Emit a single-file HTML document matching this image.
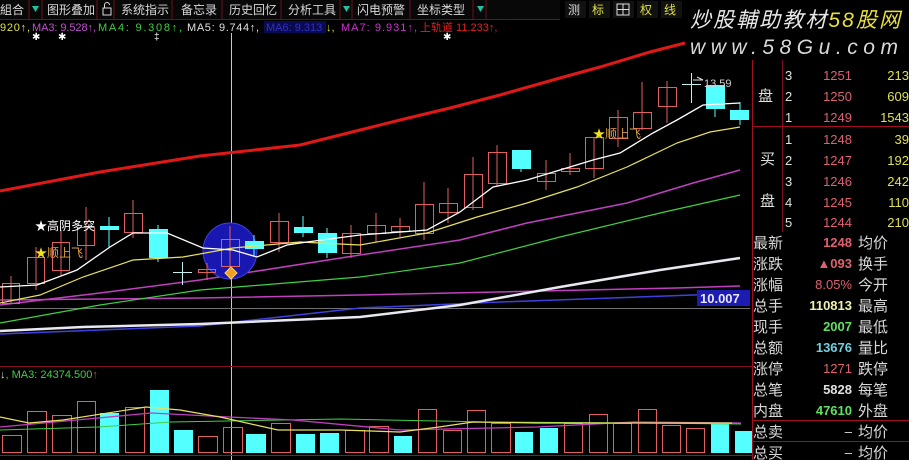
<!DOCTYPE html>
<html><head><meta charset="utf-8"><style>
html,body{margin:0;padding:0;background:#000;width:909px;height:460px;overflow:hidden}
svg{display:block}
text{font-family:"Liberation Sans","Noto Sans CJK SC",sans-serif}
</style></head><body>
<svg width="909" height="460" viewBox="0 0 909 460" xmlns="http://www.w3.org/2000/svg">
<rect width="909" height="460" fill="#000"/>
<!-- toolbar -->
<rect x="0" y="0" width="560" height="19" fill="#080808"/>
<g stroke="#6a1020" stroke-width="1">
<line x1="29" y1="0" x2="29" y2="19"/><line x1="42" y1="0" x2="42" y2="19"/><line x1="97" y1="0" x2="97" y2="19"/>
<line x1="114" y1="0" x2="114" y2="19"/><line x1="172" y1="0" x2="172" y2="19"/><line x1="222" y1="0" x2="222" y2="19"/>
<line x1="281" y1="0" x2="281" y2="19"/><line x1="340" y1="0" x2="340" y2="19"/><line x1="352" y1="0" x2="352" y2="19"/>
<line x1="410" y1="0" x2="410" y2="19"/><line x1="473" y1="0" x2="473" y2="19"/><line x1="486" y1="0" x2="486" y2="19"/>
<line x1="0" y1="19.5" x2="560" y2="19.5"/>
</g>
<g font-size="12" fill="#d8d8d8">
<text x="0" y="14">組合</text>
<text x="47" y="14">图形叠加</text>
<text x="121" y="14">系统指示</text>
<text x="181" y="14">备忘录</text>
<text x="229" y="14">历史回忆</text>
<text x="288" y="14">分析工具</text>
<text x="357" y="14">闪电预警</text>
<text x="417" y="14">坐标类型</text>
</g>
<g fill="#20c0a0"><path d="M32 6 L39 6 L35.5 12 Z"/><path d="M343 6 L350 6 L346.5 12 Z"/><path d="M477 6 L484 6 L480.5 12 Z"/></g>
<rect x="103" y="8" width="8" height="7" fill="none" stroke="#ddd"/><path d="M104.5 8 V5 a2.5 2.5 0 0 1 5 0" fill="none" stroke="#ddd"/>
<g font-size="12">
<rect x="565" y="1" width="21" height="17" fill="#111"/><text x="568" y="14" fill="#ddd">测</text>
<rect x="589" y="1" width="21" height="17" fill="#111"/><text x="592" y="14" fill="#e0e040">标</text>
<rect x="613" y="1" width="21" height="17" fill="#111"/><rect x="617" y="4" width="12" height="11" fill="none" stroke="#ddd"/><path d="M623 4V15M617 9.5H629" stroke="#ddd"/>
<rect x="637" y="1" width="21" height="17" fill="#111"/><text x="640" y="14" fill="#e0e040">权</text>
<rect x="661" y="1" width="21" height="17" fill="#111"/><text x="664" y="14" fill="#e0e040">线</text>
</g>
<!-- info line -->
<rect x="264" y="21" width="62" height="12" fill="#0a0a50"/>
<g font-size="11" font-family="Liberation Mono,monospace">
<text x="0" y="31" fill="#e0e040" textLength="30">920↑,</text>
<text x="32" y="31" fill="#c050d0" textLength="64">MA3: 9.528↑,</text>
<text x="98" y="31" fill="#40d040" textLength="84">MA4: 9.308↑,</text>
<text x="187" y="31" fill="#e0e0e0" textLength="72">MA5: 9.744↑,</text>
<text x="266" y="31" fill="#3030c0">MA6: 9.313</text><text x="326" y="31" fill="#e0e040">↓,</text>
<text x="341" y="31" fill="#d030d0" textLength="76">MA7: 9.931↑,</text>
<text x="420" y="31" fill="#e02020">上轨道 11.233↑,</text>
</g>
<g fill="#fff" font-size="10"><text x="32" y="40">✱</text><text x="58" y="40">✱</text><text x="154" y="40">‡</text><text x="443" y="40">✱</text></g>
<!-- crosshair -->
<line x1="231.5" y1="33" x2="231.5" y2="460" stroke="#c8c8c8" stroke-width="1"/>
<line x1="0" y1="308.5" x2="750" y2="308.5" stroke="#707070" stroke-width="1"/>
<polyline fill="none" stroke="#e01818" stroke-width="3" points="0,191 100,172 200,156 300,145 360,130 400,120 450,108 500,95 560,78 600,67 650,52 685,43"/>
<polyline fill="none" stroke="#4040e0" stroke-width="1.5" points="0,334 200,326 360,308 500,302 693,295 750,294"/>
<polyline fill="none" stroke="#c040c0" stroke-width="1.5" points="0,300 200,298 360,295 677,288 740,286"/>
<polyline fill="none" stroke="#e8e8f0" stroke-width="2.5" points="0,331 83,327 200,324 360,317 460,305 560,287 660,270 740,258"/>
<polyline fill="none" stroke="#40d040" stroke-width="1.2" points="0,323 100,305 200,290 360,277 460,263 560,237 660,213 740,195"/>
<polyline fill="none" stroke="#c040c0" stroke-width="1.5" points="0,305 100,293 200,280 360,255 460,240 527,223 627,203 693,183 740,170"/>
<ellipse cx="230" cy="251" rx="27" ry="28" fill="#1818b0" stroke="#4040e0" stroke-width="1"/>
<g stroke="#e06060" stroke-width="1" fill="none">
<line x1="11" y1="276" x2="11" y2="303"/><rect x="2.5" y="283.5" width="17" height="20"/>
<line x1="36" y1="247" x2="36" y2="290"/><rect x="27.5" y="257.5" width="17" height="26"/>
<line x1="61" y1="230" x2="61" y2="275"/><rect x="52.5" y="242.5" width="17" height="28"/>
<line x1="86" y1="207" x2="86" y2="260"/><rect x="77.5" y="227.5" width="17" height="18"/>
<line x1="133" y1="200" x2="133" y2="238"/><rect x="124.5" y="213.5" width="18" height="19"/>
<line x1="207" y1="263" x2="207" y2="280"/><rect x="198.5" y="269.5" width="17" height="3"/>
<line x1="230" y1="226" x2="230" y2="275"/><rect x="221.5" y="239.5" width="18" height="27"/>
<line x1="279" y1="213" x2="279" y2="252"/><rect x="270.5" y="221.5" width="18" height="21"/>
<line x1="351" y1="225" x2="351" y2="258"/><rect x="342.5" y="233.5" width="18" height="20"/>
<line x1="376" y1="213" x2="376" y2="242"/><rect x="367.5" y="225.5" width="18" height="8"/>
<line x1="400" y1="218" x2="400" y2="237"/><rect x="391.5" y="226.5" width="18" height="5"/>
<line x1="424" y1="182" x2="424" y2="240"/><rect x="415.5" y="204.5" width="18" height="29"/>
<line x1="448" y1="188" x2="448" y2="223"/><rect x="439.5" y="203.5" width="18" height="9"/>
<line x1="473" y1="157" x2="473" y2="210"/><rect x="464.5" y="174.5" width="18" height="33"/>
<line x1="497" y1="145" x2="497" y2="186"/><rect x="488.5" y="152.5" width="18" height="31"/>
<line x1="546" y1="160" x2="546" y2="190"/><rect x="537.5" y="173.5" width="18" height="8"/>
<line x1="570" y1="153" x2="570" y2="175"/><rect x="561.5" y="168.5" width="18" height="3"/>
<line x1="594" y1="137" x2="594" y2="178"/><rect x="585.5" y="137.5" width="18" height="31"/>
<line x1="618" y1="110" x2="618" y2="147"/><rect x="609.5" y="117.5" width="18" height="21"/>
<line x1="642" y1="82" x2="642" y2="130"/><rect x="633.5" y="112.5" width="18" height="16"/>
<line x1="667" y1="81" x2="667" y2="123"/><rect x="658.5" y="87.5" width="18" height="19"/>
</g>
<g stroke="#54ffff" stroke-width="1">
<line x1="109" y1="217" x2="109" y2="247"/><line x1="158" y1="225" x2="158" y2="262"/>
<line x1="254" y1="235" x2="254" y2="256"/><line x1="303" y1="216" x2="303" y2="237"/>
<line x1="327" y1="228" x2="327" y2="258"/><line x1="521" y1="168" x2="521" y2="172"/>
<line x1="715" y1="85" x2="715" y2="117"/><line x1="740" y1="102" x2="740" y2="125"/>
</g>
<g fill="#54ffff">
<rect x="100" y="226" width="19" height="4"/><rect x="149" y="229" width="19" height="29"/>
<rect x="245" y="241" width="19" height="8"/><rect x="294" y="227" width="19" height="6"/>
<rect x="318" y="233" width="19" height="20"/><rect x="512" y="150" width="19" height="19"/>
<rect x="706" y="85" width="19" height="24"/><rect x="730" y="110" width="19" height="10"/>
</g>
<g stroke="#c0f0f0" stroke-width="1">
<line x1="173" y1="272.5" x2="192" y2="272.5"/><line x1="182.5" y1="262" x2="182.5" y2="285"/>
<line x1="682" y1="84.5" x2="701" y2="84.5"/><line x1="691.5" y1="73" x2="691.5" y2="103"/>
</g>
<polyline fill="none" stroke="#e8e060" stroke-width="1.2" points="0,303 40,295 83,277 133,260 183,257 233,248 300,242 360,245 427,233 477,217 527,203 577,187 627,167 677,143 710,132 740,127"/>
<polyline fill="none" stroke="#ffffff" stroke-width="1.3" points="0,287 37,285 77,270 110,247 133,233 167,233 203,248 233,250 257,257 287,245 307,242 360,235 427,230 460,212 493,187 527,180 560,170 593,160 620,153 653,133 677,120 703,105 740,103"/>
<g font-size="12">
<text x="35" y="230" fill="#fff">★高阴多突</text>
<text x="35" y="257" fill="#e0a040"><tspan fill="#f0e020">★</tspan>顺上飞</text>
<text x="593" y="138" fill="#e0a040"><tspan fill="#f0e020">★</tspan>顺上飞</text>
<text x="704" y="87" fill="#d0d0d0" font-size="11">13.59</text>
</g>
<path d="M693 80 L703 80 L697 77" stroke="#ddd" fill="none"/>
<path d="M231 267 L237 273 L231 279 L225 273 Z" fill="#f0a020" stroke="#ffd060"/>
<rect x="697" y="290" width="53" height="16" fill="#1c1cb0"/>
<text x="700" y="303" font-size="13" font-weight="bold" fill="#e8e8ff">10.007</text>
<!-- watermark -->
<text x="690" y="27" font-size="21" fill="#e8e8e8" font-style="italic" textLength="210">炒股輔助教材<tspan fill="#e8e040">58股网</tspan></text>
<text x="690" y="54" font-size="21" fill="#d8d8d8" font-style="italic" textLength="208">www.58Gu.com</text>
<!-- volume panel -->
<line x1="0" y1="366.5" x2="752" y2="366.5" stroke="#801020"/>
<line x1="0" y1="455.5" x2="752" y2="455.5" stroke="#a01020"/>
<text x="0" y="378" font-size="11" font-family="Liberation Mono,monospace" fill="#40d040"><tspan fill="#ddd">↓</tspan>, MA3: 24374.500<tspan fill="#e04040">↑</tspan></text>
<g stroke="#e06060" fill="none">
<rect x="2.5" y="435.5" width="19" height="17"/><rect x="27.5" y="411.5" width="19" height="41"/>
<rect x="52.5" y="415.5" width="19" height="37"/><rect x="77.5" y="401.5" width="18" height="51"/>
<rect x="125.5" y="407.5" width="19" height="45"/><rect x="198.5" y="436.5" width="19" height="16"/>
<rect x="223.5" y="427.5" width="19" height="25"/><rect x="271.5" y="423.5" width="19" height="29"/>
<rect x="345.5" y="430.5" width="19" height="22"/><rect x="369.5" y="426.5" width="19" height="26"/>
<rect x="418.5" y="409.5" width="18" height="43"/><rect x="443.5" y="430.5" width="18" height="22"/>
<rect x="467.5" y="410.5" width="18" height="42"/><rect x="491.5" y="423.5" width="19" height="29"/>
<rect x="564.5" y="423.5" width="18" height="29"/><rect x="589.5" y="414.5" width="18" height="38"/>
<rect x="613.5" y="423.5" width="18" height="29"/><rect x="638.5" y="409.5" width="18" height="43"/>
<rect x="662.5" y="425.5" width="18" height="27"/><rect x="686.5" y="428.5" width="18" height="24"/>
</g>
<g fill="#54ffff">
<rect x="100" y="413" width="19" height="40"/><rect x="150" y="390" width="19" height="63"/>
<rect x="174" y="430" width="19" height="23"/><rect x="246" y="434" width="20" height="19"/>
<rect x="296" y="434" width="19" height="19"/><rect x="320" y="433" width="19" height="20"/>
<rect x="394" y="436" width="18" height="17"/><rect x="515" y="432" width="18" height="21"/>
<rect x="540" y="428" width="18" height="25"/><rect x="711" y="424" width="18" height="29"/>
<rect x="735" y="431" width="17" height="22"/>
</g>
<polyline fill="none" stroke="#40d040" points="0,430 98,427 171,422 341,419 488,422 634,423 741,424"/>
<polyline fill="none" stroke="#c040c0" stroke-width="1.3" points="0,427 98,418 151,413 229,417 293,420 400,430 537,427 634,422 741,423"/>
<polyline fill="none" stroke="#e8e060" stroke-width="1.2" points="0,417 29,423 63,420 146,407 180,410 220,417 278,430 341,430 400,432 439,427 473,422 537,423 732,423"/>
<!-- right panel -->
<line x1="752.5" y1="60" x2="752.5" y2="460" stroke="#a01020"/>
<line x1="782.5" y1="60" x2="782.5" y2="232" stroke="#801020"/>
<line x1="752" y1="126.5" x2="909" y2="126.5" stroke="#a01020"/>
<line x1="752" y1="420.5" x2="909" y2="420.5" stroke="#a01020"/>
<line x1="752" y1="441.5" x2="909" y2="441.5" stroke="#a01020"/>
<g font-size="15" fill="#e0e0e0">
<text x="758" y="101">盘</text><text x="760" y="164">买</text><text x="760" y="206">盘</text>
</g>
<g font-size="13" fill="#e0e0e0">
<text x="785" y="80">3</text><text x="785" y="101">2</text><text x="785" y="122">1</text>
<text x="785" y="144">1</text><text x="785" y="165">2</text><text x="785" y="186">3</text>
<text x="785" y="207">4</text><text x="785" y="227">5</text>
</g>
<g font-size="13" fill="#e06070" text-anchor="end">
<text x="852" y="80">1251</text><text x="852" y="101">1250</text><text x="852" y="122">1249</text>
<text x="852" y="144">1248</text><text x="852" y="165">1247</text><text x="852" y="186">1246</text>
<text x="852" y="207">1245</text><text x="852" y="227">1244</text>
</g>
<g font-size="13" fill="#e0e050" text-anchor="end">
<text x="909" y="80">213</text><text x="909" y="101">609</text><text x="909" y="122">1543</text>
<text x="909" y="144">39</text><text x="909" y="165">192</text><text x="909" y="186">242</text>
<text x="909" y="207">110</text><text x="909" y="227">210</text>
</g>
<g font-size="15" fill="#d8d8d8">
<text x="753" y="248">最新</text><text x="858" y="248">均价</text>
<text x="753" y="269">涨跌</text><text x="858" y="269">换手</text>
<text x="753" y="290">涨幅</text><text x="858" y="290">今开</text>
<text x="753" y="311">总手</text><text x="858" y="311">最高</text>
<text x="753" y="332">现手</text><text x="858" y="332">最低</text>
<text x="753" y="353">总额</text><text x="858" y="353">量比</text>
<text x="753" y="374">涨停</text><text x="858" y="374">跌停</text>
<text x="753" y="395">总笔</text><text x="858" y="395">每笔</text>
<text x="753" y="416">内盘</text><text x="858" y="416">外盘</text>
<text x="753" y="437">总卖</text><text x="858" y="437">均价</text>
<text x="753" y="458">总买</text><text x="858" y="458">均价</text>
</g>
<g font-size="13" text-anchor="end" font-weight="bold">
<text x="852" y="247" fill="#e06070">1248</text>
<text x="852" y="268" fill="#e06070">▲093</text>
<text x="852" y="289" fill="#e06070" font-weight="normal">8.05%</text>
<text x="852" y="310" fill="#f0f0b0">110813</text>
<text x="852" y="331" fill="#60e060">2007</text>
<text x="852" y="352" fill="#70d0e0">13676</text>
<text x="852" y="373" fill="#e06070" font-weight="normal">1271</text>
<text x="852" y="394" fill="#e0e0e0">5828</text>
<text x="852" y="415" fill="#60e060">47610</text>
<text x="852" y="436" fill="#e0e0e0" font-weight="normal">–</text>
<text x="852" y="457" fill="#e0e0e0" font-weight="normal">–</text>
</g>
</svg>
</body></html>
